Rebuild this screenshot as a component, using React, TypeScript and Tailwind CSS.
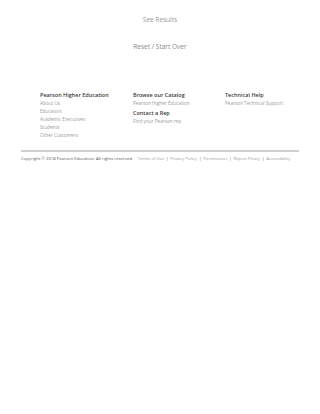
import React from 'react';

const columns = [
    {
        sections: [
            {
                title: 'Pearson Higher Education',
                links: ['About Us', 'Educators', 'Academic Executives', 'Students', 'Other Customers'],
            },
        ],
    },
    {
        sections: [
            { title: 'Browse our Catalog', links: ['Pearson Higher Education'] },
            { title: 'Contact a Rep', links: ['Find your Pearson rep'] },
        ],
    },
    {
        sections: [{ title: 'Technical Help', links: ['Pearson Technical Support'] }],
    },
];

const legal = ['Terms of Use', 'Privacy Policy', 'Permissions', 'Report Piracy', 'Accessibility'];

export default function App() {
    return (
        <div className="w-[320px] h-[414px] bg-white font-['Open_Sans',sans-serif] overflow-hidden">
            <div className="flex flex-col items-center pt-[14px]">
                <button className="text-[6.5px] leading-[12px] text-[#9a9a9a]">See Results</button>
                <button className="mt-[15px] text-[6.5px] leading-[12px] text-[#8a8a8a]">Reset / Start Over</button>
            </div>

            <div className="grid grid-cols-[93px_92px_1fr] pl-[40px] pr-[10px] mt-[38px]">
                {columns.map((col, i) => (
                    <div key={i} className="flex flex-col gap-[2px]">
                        {col.sections.map((s) => (
                            <div key={s.title}>
                                <h4 className="text-[5.5px] leading-[8px] font-semibold text-[#3a3a3a]">{s.title}</h4>
                                <ul>
                                    {s.links.map((l) => (
                                        <li key={l} className="text-[4.7px] leading-[8px] text-[#9c9c9c]">{l}</li>
                                    ))}
                                </ul>
                            </div>
                        ))}
                    </div>
                ))}
            </div>

            <div className="mx-[21px] mt-[11px] border-t-[2px] border-[#cfcfcf]" />
            <p className="mx-[21px] mt-[3px] text-[4.25px] leading-[7px] text-[#555] whitespace-nowrap">
                Copyright © 2018 Pearson Education. All rights reserved.
                <span className="ml-[5px]">
                    {legal.map((l, i) => (
                        <span key={l}>
                            {i > 0 && <span className="mx-[2px] text-[#555]">|</span>}
                            <span className="text-[#999]">{l}</span>
                        </span>
                    ))}
                </span>
            </p>
        </div>
    );
}
